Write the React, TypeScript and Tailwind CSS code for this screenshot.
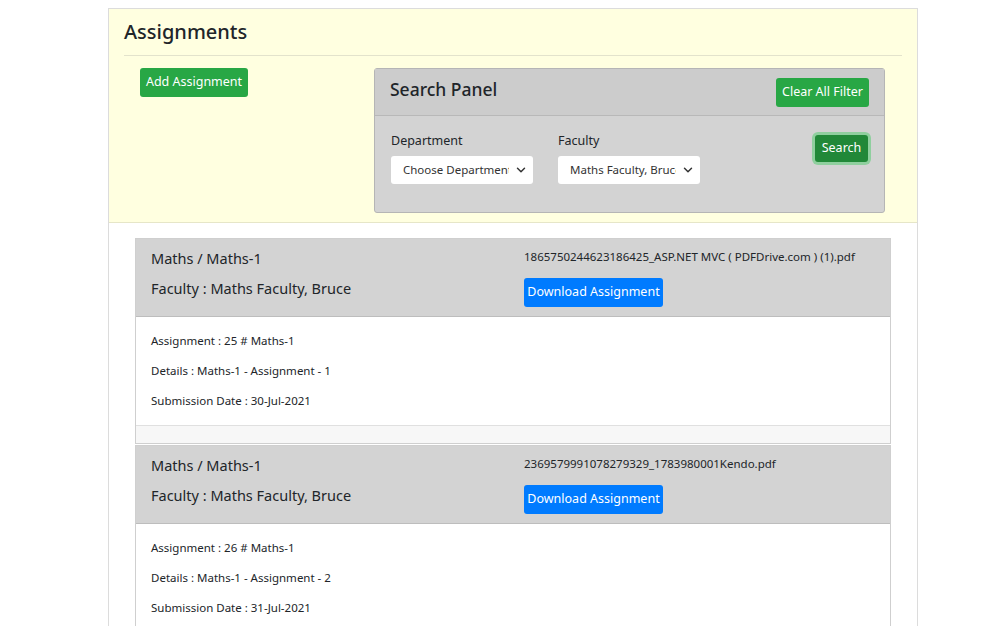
import { ChevronDown } from "lucide-react";

const assignments = [
  {
    id: 25,
    subject: "Maths / Maths-1",
    faculty: "Maths Faculty, Bruce",
    file: "1865750244623186425_ASP.NET MVC ( PDFDrive.com ) (1).pdf",
    title: "Maths-1",
    details: "Maths-1 - Assignment - 1",
    date: "30-Jul-2021",
  },
  {
    id: 26,
    subject: "Maths / Maths-1",
    faculty: "Maths Faculty, Bruce",
    file: "2369579991078279329_1783980001Kendo.pdf",
    title: "Maths-1",
    details: "Maths-1 - Assignment - 2",
    date: "31-Jul-2021",
  },
];

function FakeSelect({ value }: { value: string }) {
  return (
    <div className="flex h-[28px] w-[142px] items-center rounded-[3px] bg-white pl-[12px] pr-[5px]">
      <span className="w-[106px] overflow-hidden whitespace-nowrap text-[11.5px] text-[#333]">{value}</span>
      <ChevronDown className="ml-auto h-[14px] w-[14px] text-[#333]" strokeWidth={2.5} />
    </div>
  );
}

function AssignmentCard({ a }: { a: (typeof assignments)[number] }) {
  return (
    <div className="mb-[1px] border border-[#cfcfcf] bg-white">
      {/* Header */}
      <div className="grid grid-cols-2 border-b border-[#bdbdbd] bg-[#d3d3d3]">
        <div className="pl-[15px] pt-[8px] text-[14.5px] text-[#212529]">
          <div className="h-[22px] leading-[22px]">{a.subject}</div>
          <div className="mt-[8px] h-[22px] leading-[22px]">Faculty : {a.faculty}</div>
        </div>
        <div className="pl-[11px] pt-[9px] pb-[9px]">
          <div className="h-[18px] text-[11.5px] leading-[18px] text-[#212529]">{a.file}</div>
          <button className="mt-[12px] h-[29px] w-[139px] rounded-[3px] bg-[#007bff] text-[12.5px] text-white">
            Download Assignment
          </button>
        </div>
      </div>
      {/* Body */}
      <div className="space-y-[12px] py-[15px] pl-[15px] text-[11.5px] leading-[18px] text-[#212529]">
        <div>Assignment : {a.id} # {a.title}</div>
        <div>Details : {a.details}</div>
        <div>Submission Date : {a.date}</div>
      </div>
      {/* Footer */}
      <div className="h-[18px] border-t border-[#e0e0e0] bg-[#f7f7f7]" />
    </div>
  );
}

export default function App() {
  return (
    <div className="min-h-screen bg-white pt-[8px] font-['Noto_Sans',sans-serif] text-[#212529]">
      <div className="ml-[108px] w-[810px] border border-b-0 border-[#dcdcdc]">
        {/* Top area */}
        <div className="border-b border-[#e6e6c8] bg-[#ffffe0] px-[15px] pt-[10px] pb-[9px]">
          <h2 className="h-[26px] text-[20px] leading-[26px] font-medium">Assignments</h2>
          <hr className="mt-[10px] border-[#e3e3cc]" />
          <div className="mt-[12px] flex">
            <div className="w-[250px] pl-[16px]">
              <button className="h-[29px] w-[108px] rounded-[3px] bg-[#28a745] text-[12.5px] text-white">
                Add Assignment
              </button>
            </div>
            <div className="h-[145px] w-[511px] rounded-[3px] border border-[#b5b5b5] bg-[#d3d3d3]">
              <div className="flex h-[47px] items-start justify-between border-b border-[#b8b8b8] bg-[#cccccc] pl-[15px] pr-[15px] pt-[9px]">
                <div className="text-[17.5px] leading-[22px] font-medium">Search Panel</div>
                <button className="h-[29px] w-[93px] rounded-[3px] bg-[#28a745] text-[12.5px] text-white">
                  Clear All Filter
                </button>
              </div>
              <div className="flex pl-[16px] pr-[16px] pt-[15px]">
                <div className="w-[167px]">
                  <div className="h-[20px] text-[12.5px] leading-[20px]">Department</div>
                  <div className="mt-[5px]">
                    <FakeSelect value="Choose Department" />
                  </div>
                </div>
                <div className="w-[167px]">
                  <div className="h-[20px] text-[12.5px] leading-[20px]">Faculty</div>
                  <div className="mt-[5px]">
                    <FakeSelect value="Maths Faculty, Bruce" />
                  </div>
                </div>
                <div className="ml-auto pt-[3px]">
                  <button className="h-[27px] w-[53px] rounded-[3px] bg-[#218838] text-[12.5px] text-white ring-[3px] ring-[#8fcf9e]">
                    Search
                  </button>
                </div>
              </div>
            </div>
          </div>
        </div>
        {/* Cards */}
        <div className="px-[26px] pt-[15px]">
          {assignments.map((a) => (
            <AssignmentCard key={a.id} a={a} />
          ))}
        </div>
      </div>
    </div>
  );
}
